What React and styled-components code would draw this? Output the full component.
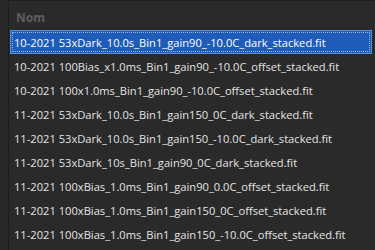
import React from "react";
import styled, { createGlobalStyle } from "styled-components";

const Global = createGlobalStyle`
  html, body { margin: 0; padding: 0; background: #2a2a2a; }
  body { font-family: "Open Sans", "Noto Sans", sans-serif; }
`;

const Frame = styled.div`
  width: 375px;
  height: 250px;
  display: flex;
  overflow: hidden;
  background: #2a2a2a;
`;

const Gutter = styled.div`
  width: 8px;
  flex: none;
  background: #282828;
  border-right: 1px solid #1e1e1e;
`;

const List = styled.div`
  flex: 1;
  display: flex;
  flex-direction: column;
  padding-top: 4px;
  border-top: 1px solid #1f1f1f;
`;

const Header = styled.div`
  height: 25px;
  display: flex;
  align-items: center;
  padding-left: 7px;
  font-size: 12px;
  font-weight: 700;
  color: #5e5e5e;
`;

const Row = styled.div`
  height: 24px;
  margin-right: 3px;
  margin-left: 1px;
  display: flex;
  align-items: center;
  padding-left: 3px;
  box-sizing: border-box;
  font-size: 11.15px;
  color: ${(p) => (p.$selected ? "#ffffff" : "#e4e4e4")};
  white-space: nowrap;
  background: ${(p) => (p.$selected ? "#1f5bb8" : "transparent")};
  border: 1px solid ${(p) => (p.$selected ? "#5b8fd8" : "transparent")};
  outline: ${(p) => (p.$selected ? "1px dotted #8fb4e6" : "none")};
  outline-offset: -3px;
`;

const files = [
  "10-2021 53xDark_10.0s_Bin1_gain90_-10.0C_dark_stacked.fit",
  "10-2021 100Bias_x1.0ms_Bin1_gain90_-10.0C_offset_stacked.fit",
  "10-2021 100x1.0ms_Bin1_gain90_-10.0C_offset_stacked.fit",
  "11-2021 53xDark_10.0s_Bin1_gain150_0C_dark_stacked.fit",
  "11-2021 53xDark_10.0s_Bin1_gain150_-10.0C_dark_stacked.fit",
  "11-2021 53xDark_10s_Bin1_gain90_0C_dark_stacked.fit",
  "11-2021 100xBias_1.0ms_Bin1_gain90_0.0C_offset_stacked.fit",
  "11-2021 100xBias_1.0ms_Bin1_gain150_0C_offset_stacked.fit",
  "11-2021 100xBias_1.0ms_Bin1_gain150_-10.0C_offset_stacked.fit",
];

export default function App() {
  return (
    <>
      <Global />
      <Frame>
        <Gutter />
        <List>
          <Header>Nom</Header>
          {files.map((f, i) => (
            <Row key={f} $selected={i === 0}>
              {f}
            </Row>
          ))}
        </List>
      </Frame>
    </>
  );
}
